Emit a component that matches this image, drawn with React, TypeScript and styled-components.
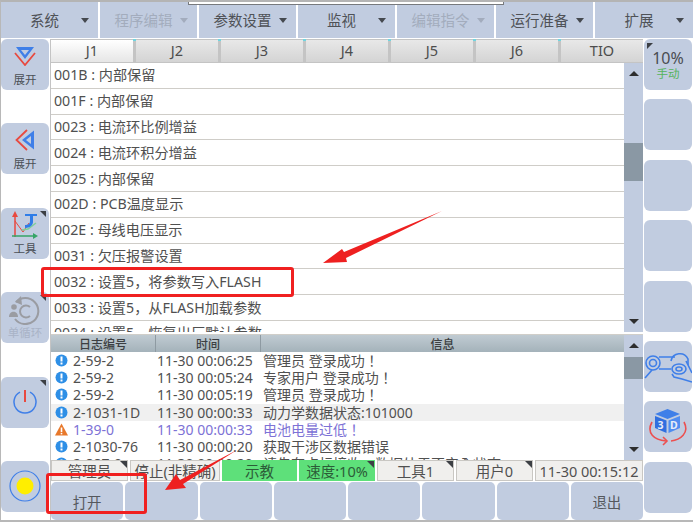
import React from 'react';
import styled, { createGlobalStyle } from 'styled-components';

const BLUE = '#c1cce0';

const GlobalStyle = createGlobalStyle`
    html, body {
        margin: 0;
        padding: 0;
        background: #ffffff;
    }
    body {
        font-family: "Noto Sans", "Noto Sans CJK SC", sans-serif;
        color: #4a4a4a;
    }
`;

const Screen = styled.div`
    position: relative;
    width: 693px;
    height: 522px;
    overflow: hidden;
    background: #ffffff;
    box-sizing: border-box;
    border-top: 2px solid #b4b4b4;
    border-bottom: 2px solid #b8b8b8;
    border-left: 1px solid #b8b8b8;
`;

const MenuBar = styled.div`
    display: grid;
    grid-template-columns: repeat(6, 97px) 1fr;
    column-gap: 2px;
    height: 36px;
`;

const MenuItem = styled.div<{ $disabled?: boolean }>`
    display: flex;
    align-items: center;
    padding-right: 9px;
    background: ${BLUE};
    font-size: 14.5px;
    color: ${(p) => (p.$disabled ? '#a3acbd' : '#4f5257')};
`;

const MenuLabel = styled.span`
    flex: 1;
    text-align: center;
    padding-left: 7px;
    line-height: 20px;
`;

const Caret = styled.span<{ $disabled?: boolean }>`
    width: 0;
    height: 0;
    border-left: 4px solid transparent;
    border-right: 4px solid transparent;
    border-top: 5px solid ${(p) => (p.$disabled ? '#a3acbd' : '#45494f')};
`;

const PopupEdge = styled.div`
    position: absolute;
    top: -2px;
    left: 187px;
    width: 316px;
    height: 5px;
    box-sizing: border-box;
    background: #ffffff;
    border: 1px solid #77797c;
    border-top: none;
`;

const Body = styled.div`
    display: grid;
    grid-template-columns: 49px 593px 49px;
    height: 482px;
    padding-top: 1px;
    box-sizing: border-box;
`;

const LeftRail = styled.div`
    display: flex;
    flex-direction: column;
    gap: 33.4px;
    padding-right: 1px;
`;

const RightRail = styled.div`
    display: flex;
    flex-direction: column;
    gap: 9.4px;
    padding-left: 1px;
`;

const RailButton = styled.div<{ $muted?: boolean }>`
    position: relative;
    height: 51px;
    flex: none;
    border-radius: 6px;
    background: ${BLUE};
    display: flex;
    flex-direction: column;
    align-items: center;
    justify-content: center;
    font-size: 11.5px;
    line-height: 14px;
    color: ${(p) => (p.$muted ? '#a9b3c6' : '#4a4f55')};
`;

const IconSlot = styled.div`
    flex: 1;
    min-height: 0;
    display: flex;
    align-items: center;
    justify-content: center;
`;

const Caption = styled.div`
    flex: none;
    margin-bottom: 3px;
`;

const CornerMark = styled.span`
    position: absolute;
    top: 3px;
    right: 3px;
    width: 0;
    height: 0;
    border-top: 6px solid #3c3f44;
    border-left: 6px solid transparent;
`;

const StatusCorner = styled.span`
    position: absolute;
    top: 0;
    right: 0;
    width: 0;
    height: 0;
    border-top: 7px solid #3c3f44;
    border-left: 7px solid transparent;
`;

const SpeedCorner = styled.span`
    position: absolute;
    top: 4px;
    left: 3px;
    width: 0;
    height: 0;
    border-top: 6px solid #3c3f44;
    border-right: 6px solid transparent;
`;

const SpeedValue = styled.div`
    font-size: 16px;
    line-height: 18px;
    color: #4a4d52;
`;

const SpeedMode = styled.div`
    font-size: 11.5px;
    line-height: 14px;
    color: #54b45c;
`;

const Center = styled.div`
    display: flex;
    flex-direction: column;
    min-width: 0;
    border-left: 1px solid #c4c4c4;
`;

const TabStrip = styled.div`
    display: grid;
    grid-template-columns: repeat(7, 1fr);
    height: 24px;
    background: #c4c4c4;
    box-sizing: border-box;
    padding: 1px 0 2px;
    column-gap: 3px;
`;

const Tab = styled.div<{ $active?: boolean }>`
    position: relative;
    display: flex;
    align-items: center;
    justify-content: center;
    padding-bottom: 2px;
    font-size: 14.5px;
    color: #4d4d4d;
    background: ${(p) => (p.$active ? 'linear-gradient(#ffffff, #e6e6e6)' : 'linear-gradient(#e8e8e8, #d4d4d4)')};
    &:not(:last-child)::after {
        content: '';
        position: absolute;
        top: -1px;
        right: -3px;
        width: 3px;
        height: 2px;
        background: #6fd6e0;
    }
`;

const ListPane = styled.div`
    display: grid;
    grid-template-columns: 1fr 19px;
    height: 269px;
    flex: none;
`;

const ParamList = styled.div`
    overflow: hidden;
    background: #ffffff;
`;

const ParamRow = styled.div`
    height: 25.8px;
    box-sizing: border-box;
    display: flex;
    align-items: center;
    padding: 0 0 2px 3px;
    font-size: 14.2px;
    white-space: nowrap;
    color: #505050;
    border-bottom: 1px solid #cfcdc8;
`;

const ScrollBar = styled.div`
    position: relative;
    background: ${BLUE};
`;

const ArrowUp = styled.span`
    position: absolute;
    top: 8px;
    left: 5px;
    width: 0;
    height: 0;
    border-left: 5px solid transparent;
    border-right: 5px solid transparent;
    border-bottom: 5px solid #2e2e2e;
`;

const ArrowDown = styled.span`
    position: absolute;
    bottom: 8px;
    left: 5px;
    width: 0;
    height: 0;
    border-left: 5px solid transparent;
    border-right: 5px solid transparent;
    border-top: 5px solid #2e2e2e;
`;

const Thumb = styled.div<{ $top: number; $height: number }>`
    position: absolute;
    left: 0;
    right: 0;
    top: ${(p) => p.$top}px;
    height: ${(p) => p.$height}px;
    background: #8a98a4;
`;

const LogPane = styled.div`
    display: grid;
    grid-template-columns: 1fr 19px;
    height: 125px;
    flex: none;
    margin-top: 2px;
    border-top: 1px solid #d0cec9;
`;

const LogTable = styled.div`
    overflow: hidden;
    display: flex;
    flex-direction: column;
`;

const LogHead = styled.div`
    display: grid;
    grid-template-columns: 105px 105px 1fr;
    height: 17px;
    flex: none;
    background: linear-gradient(#c0cbd2, #a4b2ba);
`;

const LogHeadCell = styled.div`
    display: flex;
    align-items: center;
    justify-content: center;
    font-size: 12px;
    font-weight: 500;
    color: #3c3f42;
    border-right: 1px solid #8e9aa2;
    &:last-child {
        border-right: none;
    }
`;

const LogRow = styled.div<{ $selected?: boolean; $warn?: boolean }>`
    display: grid;
    grid-template-columns: 105px 105px 1fr;
    height: 17.2px;
    flex: none;
    align-items: center;
    font-size: 14px;
    line-height: 17px;
    white-space: nowrap;
    background: ${(p) => (p.$selected ? '#f0f0f0' : '#ffffff')};
    color: ${(p) => (p.$warn ? '#7d72d6' : '#505050')};
`;

const LogCodeCell = styled.div`
    display: flex;
    align-items: center;
    gap: 5px;
    padding-left: 4px;
`;

const LogTimeCell = styled.div`
    padding-left: 1px;
`;

const LogMessageCell = styled.div`
    padding-left: 2px;
    font-family: "Noto Sans", "Noto Sans CJK TC", sans-serif;
`;

const StatusBar = styled.div`
    display: grid;
    grid-template-columns: 77px 90px 75px 76px 77px 77px 1fr;
    column-gap: 2px;
    height: 21px;
    flex: none;
`;

const StatusCell = styled.div<{ $green?: boolean }>`
    position: relative;
    display: flex;
    align-items: center;
    justify-content: center;
    box-sizing: border-box;
    font-size: 14.5px;
    white-space: nowrap;
    overflow: hidden;
    color: ${(p) => (p.$green ? '#2c5c38' : '#505050')};
    background: ${(p) => (p.$green ? '#5ee07a' : '#f0efed')};
    border: 1px solid ${(p) => (p.$green ? '#5ee07a' : '#c9c7c3')};
`;

const SoftKeys = styled.div`
    display: grid;
    grid-template-columns: repeat(8, 1fr);
    column-gap: 2px;
    height: 38px;
    flex: none;
    margin-top: 1px;
`;

const SoftKey = styled.div`
    display: flex;
    align-items: center;
    justify-content: center;
    border-radius: 5px;
    background: ${BLUE};
    font-size: 14.5px;
    color: #55585d;
`;

const Callout = styled.div<{ $x: number; $y: number; $w: number; $h: number }>`
    position: absolute;
    left: ${(p) => p.$x}px;
    top: ${(p) => p.$y}px;
    width: ${(p) => p.$w}px;
    height: ${(p) => p.$h}px;
    box-sizing: border-box;
    border: 3px solid #f02020;
    border-radius: 3px;
`;

const Annotation = styled.svg`
    position: absolute;
    left: -1px;
    top: -2px;
    pointer-events: none;
`;

const ExpandDownIcon = () => (
    <svg width="22" height="19" viewBox="0 0 22 19">
        <path d="M2 0h18L11 12z M7 3l4 5 4-5z" fill="#3f7fe8" fillRule="evenodd" />
        <path d="M1 6l10 12L21 6" fill="none" stroke="#e8493f" strokeWidth="1.8" />
    </svg>
);

const ExpandLeftIcon = () => (
    <svg width="20" height="22" viewBox="0 0 20 22">
        <path d="M19 1.500v19L7 11z M16 7l-5 4 5 4z" fill="#3f7fe8" fillRule="evenodd" />
        <path d="M12 1L1.500 11 12 21" fill="none" stroke="#e8493f" strokeWidth="1.8" />
    </svg>
);

const ToolIcon = () => (
    <svg width="30" height="30" viewBox="0 0 30 30">
        <path d="M5 3v24" stroke="#e8493f" strokeWidth="1.5" fill="none" />
        <path d="M2 7l3-6 3 6z" fill="#e8493f" />
        <path d="M2 26h24" stroke="#35a567" strokeWidth="1.5" fill="none" />
        <path d="M23 23l5 3-5 3z" fill="#35a567" />
        <path d="M5 11l8 11 6-9" stroke="#e8493f" strokeWidth="1" fill="none" />
        <path d="M12 20l6-1 8-6" stroke="#7ed09a" strokeWidth="1.5" fill="none" />
        <path d="M15 4h12v2h-4v6c0 3-3 6-8 6v-3c3 0 5-1 5-4V6h-5z" fill="#2f7de8" />
    </svg>
);

const CycleIcon = () => (
    <svg width="32" height="32" viewBox="0 0 32 32" fill="none" stroke="#9a9ca2" strokeWidth="2">
        <path d="M7 9A13 13 0 1 1 6 26" />
        <path d="M12 3L6 9l7 3z" fill="#9a9ca2" stroke="none" />
        <circle cx="5" cy="14" r="2.800" fill="#9a9ca2" stroke="none" />
        <path d="M0 24c0-7 9-7 9 0z" fill="#9a9ca2" stroke="none" />
        <path d="M21 14a6 6 0 1 0 0 9" />
    </svg>
);

const PowerIcon = () => (
    <svg width="24" height="28" viewBox="0 0 24 28">
        <path d="M7 4.200a11 11 0 1 0 10 0" fill="none" stroke="#3f7fe8" strokeWidth="1.5" />
        <path d="M12 2v12" stroke="#e8493f" strokeWidth="2" />
    </svg>
);

const LampIcon = () => (
    <svg width="32" height="32" viewBox="0 0 32 32">
        <circle cx="16" cy="16" r="15" fill="none" stroke="#3f7fe8" strokeWidth="1.2" />
        <circle cx="16" cy="16" r="8.500" fill="#ffee00" />
    </svg>
);

const RobotHandIcon = () => (
    <svg width="48" height="51" viewBox="0 0 48 51" fill="none" stroke="#3f7fe8" strokeWidth="1.6">
        <circle cx="9" cy="22" r="7" />
        <circle cx="9" cy="22" r="3.500" />
        <path d="M15 16h16M15 28h12" />
        <path d="M1 37l7-8" />
        <path d="M27 20a9 9 0 0 1 17-2v6" />
        <ellipse cx="35" cy="28" rx="7" ry="5" />
        <ellipse cx="35" cy="28" rx="3" ry="2" />
        <path d="M28 33l2 3 8 2 10 3M42 20l6 12" />
    </svg>
);

const CubeIcon = () => (
    <svg width="48" height="51" viewBox="0 0 48 51">
        <path d="M23.500 8L36 13l-12.500 5L11 13z" fill="#3f7fe8" />
        <path d="M11 15l11.500 4.500V32L11 27z" fill="#2f6fe0" />
        <path d="M36 15l-11.500 4.500V32L36 27z" fill="#4f8cf0" />
        <text x="13.500" y="28" fontSize="10.500" fontWeight="700" fill="#e6ecf8" fontFamily="Noto Sans, sans-serif">3</text>
        <text x="26" y="28" fontSize="10.500" fontWeight="700" fill="#e6ecf8" fontFamily="Noto Sans, sans-serif">D</text>
        <path d="M8 21C2 32 10 39 22 40M40 21c6 11-4 18-13 19" fill="none" stroke="#ec5050" strokeWidth="1.600" />
        <path d="M19 36l4 4-4 4" fill="none" stroke="#ec5050" strokeWidth="1.600" />
    </svg>
);

const InfoDot = () => (
    <svg width="13" height="13" viewBox="0 0 13 13">
        <circle cx="6.500" cy="6.500" r="6" fill="#2e8fe6" />
        <rect x="5.500" y="2.500" width="2" height="5" fill="#ffffff" />
        <rect x="5.500" y="8.500" width="2" height="2" fill="#ffffff" />
    </svg>
);

const WarnTriangle = () => (
    <svg width="13" height="13" viewBox="0 0 13 13">
        <path d="M6.500 0.500L13 12.500H0z" fill="#e8782a" />
        <rect x="5.700" y="4.500" width="1.600" height="4.500" fill="#ffffff" />
        <rect x="5.700" y="9.800" width="1.600" height="1.600" fill="#ffffff" />
    </svg>
);

const menus = [
    { label: '系统' },
    { label: '程序编辑', disabled: true },
    { label: '参数设置' },
    { label: '监视' },
    { label: '编辑指令', disabled: true },
    { label: '运行准备' },
    { label: '扩展' },
];

const tabs = ['J1', 'J2', 'J3', 'J4', 'J5', 'J6', 'TIO'];

const params = [
    '001B : 内部保留',
    '001F : 内部保留',
    '0023 : 电流环比例增益',
    '0024 : 电流环积分增益',
    '0025 : 内部保留',
    '002D : PCB温度显示',
    '002E : 母线电压显示',
    '0031 : 欠压报警设置',
    '0032 : 设置5，将参数写入FLASH',
    '0033 : 设置5，从FLASH加载参数',
    '0034 : 设置5，恢复出厂默认参数',
];

const logs = [
    { code: '2-59-2', time: '11-30 00:06:25', msg: '管理员 登录成功！' },
    { code: '2-59-2', time: '11-30 00:05:24', msg: '专家用户 登录成功！' },
    { code: '2-59-2', time: '11-30 00:05:19', msg: '管理员 登录成功！' },
    { code: '2-1031-1D', time: '11-30 00:00:33', msg: '动力学数据状态:101000', selected: true },
    { code: '1-39-0', time: '11-30 00:00:33', msg: '电池电量过低！', warn: true },
    { code: '2-1030-76', time: '11-30 00:00:20', msg: '获取干涉区数据错误' },
    { code: '2-887-0', time: '11-30 00:00:20', msg: '请先在点标接收，数据处于不安全状态' },
];

const status = [
    { label: '管理员', corner: true },
    { label: '停止(非精确)' },
    { label: '示教', green: true },
    { label: '速度:10%', green: true, corner: true },
    { label: '工具1', corner: true },
    { label: '用户0', corner: true },
    { label: '11-30 00:15:12' },
];

const softKeys = ['打开', '', '', '', '', '', '', '退出'];

export default function App() {
    return (
        <Screen>
            <GlobalStyle />
            <MenuBar>
                {menus.map((m) => (
                    <MenuItem key={m.label} $disabled={m.disabled}>
                        <MenuLabel>{m.label}</MenuLabel>
                        <Caret $disabled={m.disabled} />
                    </MenuItem>
                ))}
            </MenuBar>
            <PopupEdge />
            <Body>
                <LeftRail>
                    <RailButton>
                        <IconSlot>
                            <ExpandDownIcon />
                        </IconSlot>
                        <Caption>展开</Caption>
                    </RailButton>
                    <RailButton>
                        <IconSlot>
                            <ExpandLeftIcon />
                        </IconSlot>
                        <Caption>展开</Caption>
                    </RailButton>
                    <RailButton>
                        <CornerMark />
                        <IconSlot>
                            <ToolIcon />
                        </IconSlot>
                        <Caption>工具</Caption>
                    </RailButton>
                    <RailButton $muted>
                        <CornerMark />
                        <IconSlot>
                            <CycleIcon />
                        </IconSlot>
                        <Caption>单循环</Caption>
                    </RailButton>
                    <RailButton>
                        <CornerMark />
                        <PowerIcon />
                    </RailButton>
                    <RailButton>
                        <LampIcon />
                    </RailButton>
                </LeftRail>
                <Center>
                    <TabStrip>
                        {tabs.map((t, i) => (
                            <Tab key={t} $active={i === 0}>
                                {t}
                            </Tab>
                        ))}
                    </TabStrip>
                    <ListPane>
                        <ParamList>
                            {params.map((p) => (
                                <ParamRow key={p}>{p}</ParamRow>
                            ))}
                        </ParamList>
                        <ScrollBar>
                            <ArrowUp />
                            <Thumb $top={80} $height={38} />
                            <ArrowDown />
                        </ScrollBar>
                    </ListPane>
                    <LogPane>
                        <LogTable>
                            <LogHead>
                                <LogHeadCell>日志编号</LogHeadCell>
                                <LogHeadCell>时间</LogHeadCell>
                                <LogHeadCell>信息</LogHeadCell>
                            </LogHead>
                            {logs.map((l) => (
                                <LogRow key={l.time + l.msg} $selected={l.selected} $warn={l.warn}>
                                    <LogCodeCell>
                                        {l.warn ? <WarnTriangle /> : <InfoDot />}
                                        {l.code}
                                    </LogCodeCell>
                                    <LogTimeCell>{l.time}</LogTimeCell>
                                    <LogMessageCell>{l.msg}</LogMessageCell>
                                </LogRow>
                            ))}
                        </LogTable>
                        <ScrollBar>
                            <ArrowUp />
                            <Thumb $top={22} $height={22} />
                            <ArrowDown />
                        </ScrollBar>
                    </LogPane>
                    <StatusBar>
                        {status.map((s) => (
                            <StatusCell key={s.label} $green={s.green}>
                                {s.corner && <StatusCorner />}
                                {s.label}
                            </StatusCell>
                        ))}
                    </StatusBar>
                    <SoftKeys>
                        {softKeys.map((k, i) => (
                            <SoftKey key={i}>{k}</SoftKey>
                        ))}
                    </SoftKeys>
                </Center>
                <RightRail>
                    <RailButton>
                        <SpeedCorner />
                        <SpeedValue>10%</SpeedValue>
                        <SpeedMode>手动</SpeedMode>
                    </RailButton>
                    <RailButton />
                    <RailButton />
                    <RailButton />
                    <RailButton />
                    <RailButton>
                        <RobotHandIcon />
                    </RailButton>
                    <RailButton>
                        <CubeIcon />
                    </RailButton>
                    <RailButton />
                </RightRail>
            </Body>
            <Callout $x={40} $y={265} $w={253} $h={30} />
            <Callout $x={45} $y={471} $w={101} $h={41} />
            <Annotation width="693" height="522" viewBox="0 0 693 522">
                <path d="M442 211L344 252L342 249L323 263L347 262L346 258z" fill="#ee2020" />
                <path d="M237 450L180 480L176 474L165 490L186 488L183 484z" fill="#ee2020" />
            </Annotation>
        </Screen>
    );
}
